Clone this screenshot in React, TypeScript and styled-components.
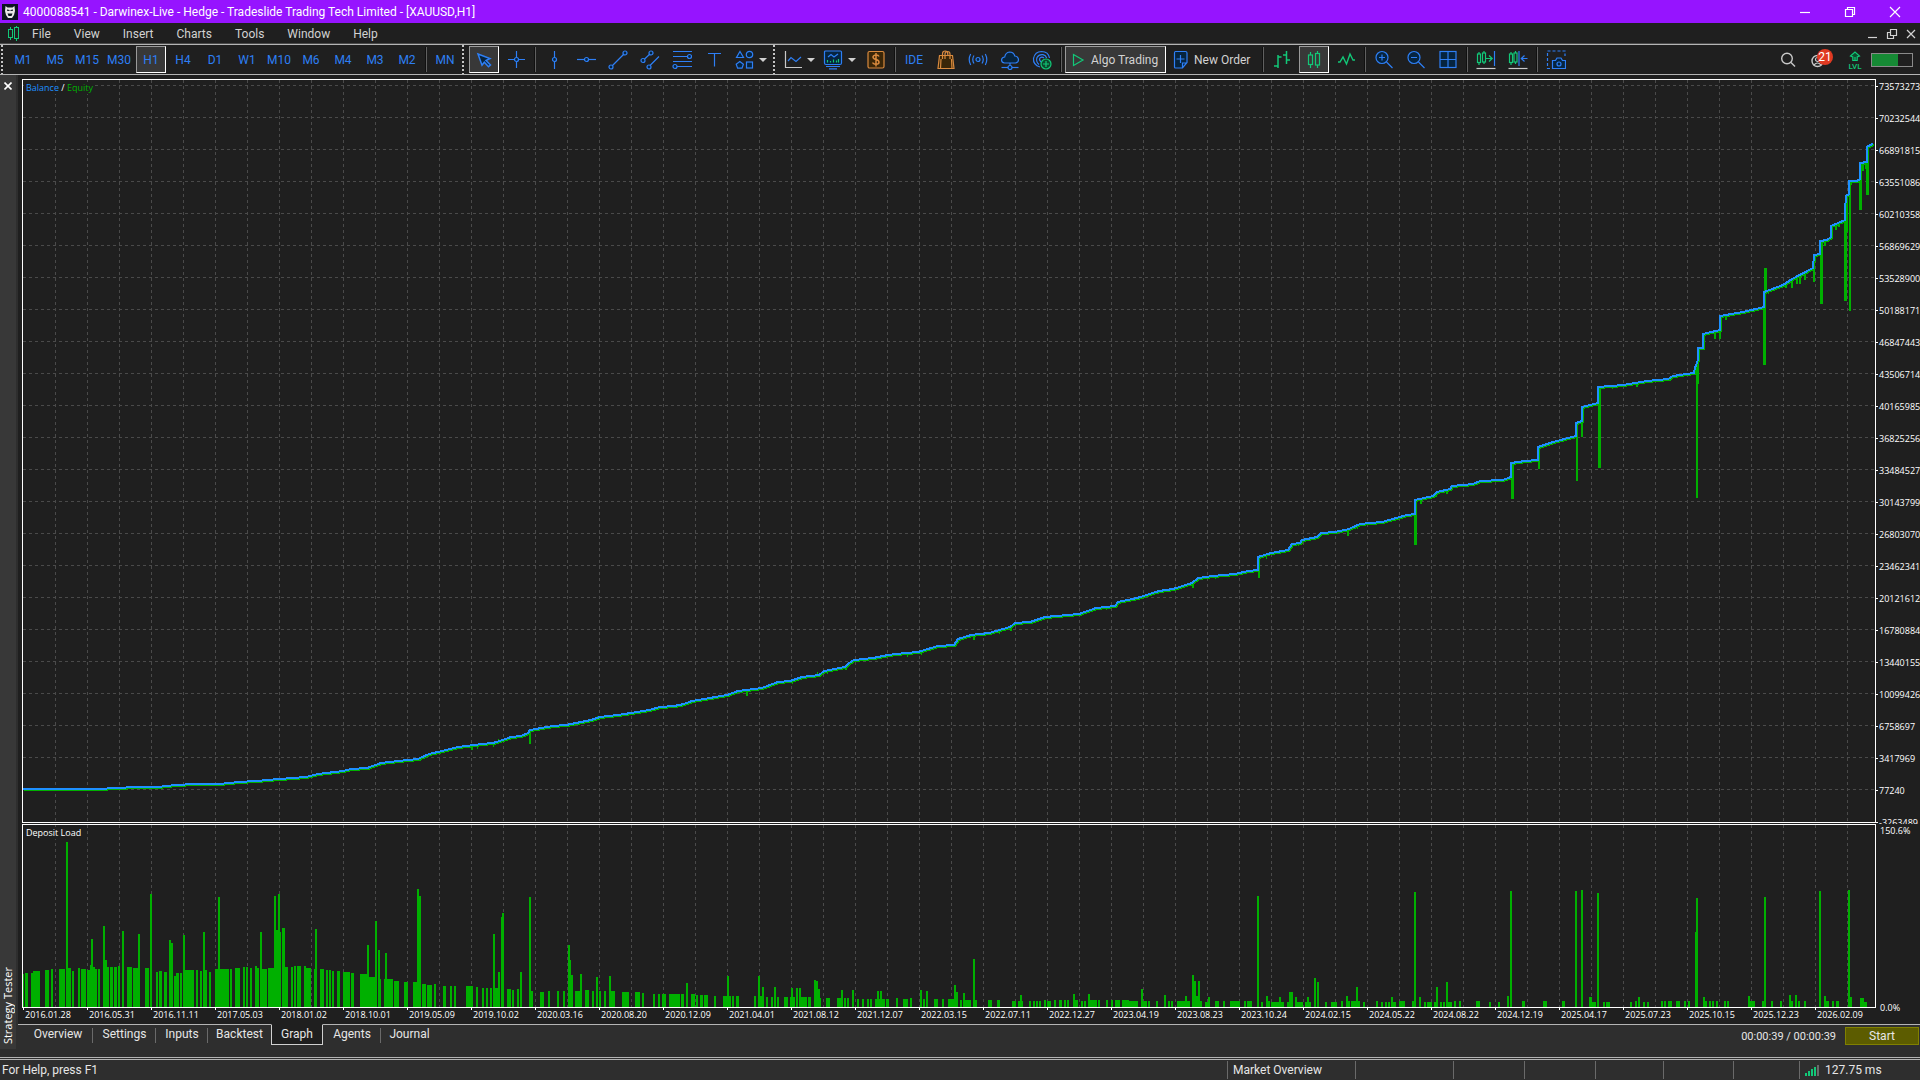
import React from 'react';
import styled, { createGlobalStyle, css } from 'styled-components';

const blue = '#2e7ff5';
const navy = '#06243f';
const green = '#12c878';
const orange = '#d98a3e';
const lime = '#00b000';

const GlobalStyle = createGlobalStyle`
  *, *::before, *::after { box-sizing: border-box; }
  html, body { margin: 0; padding: 0; background: #1f1f1f; }
  body { font-family: Roboto, "Open Sans", sans-serif; font-size: 12px; color: #e6e6e6; }
  button { font: inherit; color: inherit; background: none; border: 0; padding: 0; margin: 0; }
  svg { display: block; flex: none; }
`;

const Window = styled.div`
  display: flex;
  flex-direction: column;
  height: 100vh;
  overflow: hidden;
`;

const TitleBar = styled.header`
  display: flex;
  align-items: center;
  height: 23px;
  flex: none;
  padding: 0 3px 0 2px;
  background: #9614ff;
  color: #fff;
  white-space: nowrap;
`;

const Title = styled.h1`
  flex: 1;
  margin: 0 0 0 5px;
  font-size: 12px;
  font-weight: 400;
  line-height: 20px;
`;

const WindowButton = styled.button<{ $w: number }>`
  display: flex;
  flex: none;
  align-items: center;
  justify-content: center;
  width: ${(p) => p.$w}px;
  height: 20px;
`;

const MenuBar = styled.nav`
  display: flex;
  align-items: center;
  height: 21px;
  flex: none;
  padding: 0 4px 0 7px;
  gap: 12px;
  color: #d2d2d2;
`;

const MenuItems = styled.div`
  display: flex;
  flex: 1;
  gap: 23px;
  line-height: 18px;
`;

const ChartButtons = styled.div`
  display: flex;
  gap: 8px;
`;

const ToolBar = styled.div`
  display: flex;
  align-items: center;
  height: 31px;
  flex: none;
  gap: 2px;
  padding-left: 1px;
  padding-right: 7px;
  border-top: 1px solid #b4b4b4;
  border-bottom: 1px solid #b4b4b4;
  box-shadow: 0 -1px 0 #4a4a4a;
  color: ${blue};
  white-space: nowrap;
`;

const Tool = styled.button<{ $w?: number; $active?: boolean; $align?: string }>`
  display: flex;
  flex: none;
  align-items: center;
  justify-content: ${(p) => p.$align || 'center'};
  gap: 5px;
  width: ${(p) => p.$w || 30}px;
  height: 27px;
  border: 1px solid transparent;
  ${(p) =>
    p.$active &&
    css`
      background: #383838;
      border-color: #9a9a9a #fff #fff #9a9a9a;
    `}
`;

const ToolText = styled.span`
  color: #d2d2d2;
`;

const Separator = styled.span`
  width: 2px;
  height: 25px;
  margin: 0 1px;
  background: linear-gradient(90deg, #101010 50%, #606060 50%);
`;

const Grip = styled.span`
  width: 5px;
  height: 29px;
  background: repeating-linear-gradient(180deg, #c4c4c4 0 2px, transparent 2px 4px) left / 2px 100% no-repeat;
`;

const Caret = styled.span`
  border: 4px solid transparent;
  border-top-color: #d0d0d0;
  border-bottom: 0;
`;

const Spacer = styled.span`
  flex: 1;
`;

const Notice = styled.span`
  position: relative;
  display: block;
  width: 22px;
  height: 22px;
`;

const Badge = styled.span`
  position: absolute;
  top: 0;
  right: 0;
  width: 16px;
  height: 16px;
  border-radius: 8px;
  background: #e03a22;
  color: #fff;
  line-height: 16px;
  text-align: center;
`;

const Battery = styled.span`
  width: 42px;
  height: 14px;
  border: 1px solid #8a8a8a;
  background: linear-gradient(90deg, #168a35 65%, #1f1f1f 65%);
`;

const Workspace = styled.main`
  display: flex;
  flex: 1;
  min-height: 0;
  background: #2e2e2e;
`;

const SideStrip = styled.aside`
  display: flex;
  flex-direction: column;
  justify-content: space-between;
  align-items: center;
  width: 16px;
  flex: none;
  margin: 0 2px 8px 0;
  padding: 4px 0 5px;
  background: #383838;
`;

const CloseButton = styled.button`
  width: 14px;
  height: 14px;
  padding: 3px;
`;

const SideTitle = styled.span`
  writing-mode: vertical-rl;
  transform: rotate(180deg);
  font-family: "Open Sans", sans-serif;
  font-size: 11px;
  line-height: 14px;
  color: #fff;
`;

const Panel = styled.section`
  display: flex;
  flex-direction: column;
  flex: 1;
  min-width: 0;
`;

const Charts = styled.div`
  display: grid;
  flex: 1;
  min-height: 0;
  grid-template-columns: minmax(0, 1fr) 44px;
  grid-template-rows: minmax(0, 745fr) minmax(0, 184fr) 16px;
  padding: 4px 0 0 4px;
  background: #1f1f1f;
  color: #fff;
  font-family: "Open Sans", sans-serif;
  font-size: 9px;
  line-height: 12px;
`;

const Plot = styled.figure<{ $gap?: boolean }>`
  position: relative;
  margin: 0 0 ${(p) => (p.$gap ? 1 : 0)}px;
  min-height: 0;
  border: 1px solid #fff;
  overflow: hidden;
`;

const Drawing = styled.svg`
  width: 100%;
  height: 100%;
  shape-rendering: crispEdges;
`;

const Legend = styled.figcaption`
  position: absolute;
  top: 2px;
  left: 1px;
  padding: 0 2px;
  background: #1f1f1f;
`;

const Ink = styled.span<{ $c: string }>`
  color: ${(p) => p.$c};
`;

const PriceAxis = styled.div`
  min-height: 0;
  overflow: hidden;
`;

const PriceList = styled.div`
  display: flex;
  flex-direction: column;
  justify-content: space-between;
  height: calc(100% + 5px);
  padding-top: 2px;
`;

const PriceLabel = styled.span`
  display: flex;
  align-items: center;
  gap: 1px;
  &::before {
    content: '';
    flex: none;
    width: 2px;
    height: 1px;
    margin-bottom: 2px;
    background: #fff;
  }
`;

const LoadAxis = styled.div`
  display: flex;
  flex-direction: column;
  justify-content: space-between;
  padding: 1px 0 0 4px;
  margin-bottom: -6px;
`;

const TimeAxis = styled.div`
  display: grid;
  grid-column: 1 / 3;
  grid-template-columns: repeat(29, minmax(0, 1fr));
  margin: 0 41px 0 1px;
`;

const TimeLabel = styled.span`
  display: flex;
  gap: 1px;
  line-height: 14px;
  &::before {
    content: '';
    width: 1px;
    height: 2px;
    background: #fff;
  }
`;

const TabRow = styled.div`
  display: flex;
  height: 33px;
  flex: none;
  padding-left: 5px;
  border-top: 1px solid #b4b4b4;
`;

const Tab = styled.button<{ $active?: boolean; $last?: boolean; $w: number }>`
  position: relative;
  width: ${(p) => p.$w}px;
  height: 21px;
  padding-bottom: 3px;
  &::after {
    content: '';
    position: absolute;
    right: 0;
    top: 3px;
    width: 1px;
    height: 15px;
    background: ${(p) => (p.$last ? 'transparent' : '#6a6a6a')};
  }
  ${(p) =>
    p.$active &&
    css`
      margin-top: -1px;
      padding-bottom: 1px;
      background: #1f1f1f;
      border: 1px solid #d0d0d0;
      border-top-color: #1f1f1f;
      &::after {
        background: transparent;
      }
    `}
`;

const Timer = styled.span`
  margin-left: auto;
  margin-right: 9px;
  font-size: 11px;
  line-height: 24px;
`;

const StartButton = styled.button`
  width: 74px;
  height: 18px;
  margin: 2px 1px 0 0;
  line-height: 16px;
  background: #5c5c00;
  border: 1px solid #808000;
`;

const StatusBar = styled.footer`
  display: flex;
  align-items: center;
  height: 23px;
  flex: none;
  border-top: 3px double #b4b4b4;
  background: #2e2e2e;
`;

const Help = styled.span`
  flex: 1;
  padding-left: 2px;
`;

const StatusCell = styled.span<{ $w: number }>`
  display: flex;
  align-items: center;
  gap: 6px;
  width: ${(p) => p.$w}px;
  height: 18px;
  padding-left: 5px;
  border-left: 1px solid #6a6a6a;
`;

/* ---------- data ---------- */

const prices = [
  73573273, 70232544, 66891815, 63551086, 60210358, 56869629, 53528900, 50188171, 46847443, 43506714, 40165985,
  36825256, 33484527, 30143799, 26803070, 23462341, 20121612, 16780884, 13440155, 10099426, 6758697, 3417969, 77240,
  -3263489,
];

const dates = [
  '2016.01.28', '2016.05.31', '2016.11.11', '2017.05.03', '2018.01.02', '2018.10.01', '2019.05.09', '2019.10.02',
  '2020.03.16', '2020.08.20', '2020.12.09', '2021.04.01', '2021.08.12', '2021.12.07', '2022.03.15', '2022.07.11',
  '2022.12.27', '2023.04.19', '2023.08.23', '2023.10.24', '2024.02.15', '2024.05.22', '2024.08.22', '2024.12.19',
  '2025.04.17', '2025.07.23', '2025.10.15', '2025.12.23', '2026.02.09',
];

const balance =
  '23,789 97,789 136,787 157,787 176,785 194,784 219,784 239,782 256,781 279,779 306,777 318,774 343,771 351,769 367,768 381,763 398,761 418,759 429,754 442,751 458,747 482,744 493,743 503,740 511,737 521,736 528,733 530,730 553,726 566,725 591,720 600,717 618,715 637,712 649,710 660,707 674,706 684,704 692,701 704,699 727,695 738,691 762,688 778,682 790,681 802,677 819,675 824,671 845,667 849,663 854,660 873,658 888,655 906,653 918,652 938,646 954,645 958,639 971,635 989,633 1010,627 1015,623 1030,622 1045,617 1079,614 1096,608 1115,606 1118,602 1137,598 1159,591 1173,589 1192,583 1198,578 1213,576 1235,574 1248,571 1258,570 1258,557 1271,553 1288,550 1292,544 1300,543 1302,540 1317,537 1321,533 1335,532 1349,529 1360,524 1382,522 1407,515 1415,514 1415,500 1433,496 1437,492 1450,489 1452,486 1473,484 1480,481 1503,480 1511,477 1511,463 1525,461 1538,460 1538,447 1553,442 1576,436 1576,423 1582,421 1582,407 1598,403 1598,387 1623,385 1647,381 1668,379 1673,376 1694,373 1695,368 1698,360 1698,348 1703,348 1703,334 1720,330 1720,316 1743,312 1764,307 1764,292 1783,285 1792,279 1813,268 1814,255 1820,254 1820,241 1827,240 1831,237 1831,226 1845,220 1845,210 1846,196 1849,194 1849,181 1857,181 1860,179 1860,163 1867,162 1867,147 1870,145 1873,144';

/* equity excursions away from the balance line: [x, top, bottom, width] */
const excursions: number[][] = [
  [420, 759, 761, 1], [471, 746, 750, 2], [477, 746, 749, 1], [493, 743, 747, 1], [529, 733, 744, 2], [498, 739, 742, 1],
  [597, 716, 719, 1], [746, 690, 696, 2], [792, 681, 684, 1], [817, 672, 676, 1], [827, 671, 674, 1], [845, 667, 670, 2],
  [907, 653, 657, 1], [921, 651, 655, 1], [973, 636, 640, 2], [999, 630, 634, 1], [1010, 627, 631, 2],
  [1106, 607, 610, 1], [1192, 583, 588, 2], [1215, 576, 579, 1], [1258, 557, 578, 2], [1266, 555, 559, 1],
  [1298, 543, 546, 1], [1347, 530, 536, 2], [1357, 525, 529, 1], [1414, 500, 545, 3], [1420, 500, 504, 2],
  [1436, 493, 497, 1], [1446, 490, 494, 2], [1511, 463, 499, 3], [1538, 447, 469, 2], [1576, 423, 481, 2],
  [1581, 407, 437, 2], [1598, 387, 468, 3], [1612, 386, 389, 1], [1636, 383, 387, 2], [1669, 378, 381, 2],
  [1696, 361, 498, 2], [1697, 360, 384, 2], [1703, 334, 341, 2], [1714, 333, 339, 2], [1719, 330, 339, 2],
  [1725, 316, 320, 2], [1763, 292, 365, 3], [1764, 268, 292, 3], [1768, 291, 294, 1], [1785, 285, 288, 2],
  [1791, 280, 288, 2], [1796, 278, 284, 2], [1799, 277, 284, 2], [1804, 273, 280, 2], [1813, 257, 282, 2],
  [1820, 241, 304, 3], [1824, 241, 246, 2], [1835, 225, 230, 2], [1838, 224, 227, 2], [1844, 210, 301, 3],
  [1846, 196, 232, 2], [1849, 181, 311, 2], [1851, 181, 185, 1], [1859, 163, 210, 3], [1862, 163, 171, 2],
  [1865, 163, 169, 2], [1866, 150, 195, 3],
];

/* deposit load bars: [x, width, height] */
const load: number[][] = [
  [23, 1, 33], [25, 3, 34], [31, 2, 34], [33, 5, 36], [38, 2, 36], [45, 4, 37], [51, 2, 38], [59, 6, 38], [66, 2, 165], [68, 3, 39],
  [72, 2, 36], [78, 2, 39], [81, 5, 38], [87, 3, 37], [90, 1, 42], [91, 2, 68], [93, 2, 40], [95, 2, 38], [98, 2, 38],
  [103, 2, 81], [105, 2, 47], [107, 2, 40], [110, 3, 40], [114, 3, 40], [118, 2, 41], [122, 2, 76], [127, 5, 40],
  [133, 7, 39], [138, 2, 73], [145, 4, 39], [150, 2, 113], [156, 2, 35], [159, 3, 36], [164, 3, 35], [169, 2, 67],
  [171, 2, 64], [174, 2, 31], [176, 3, 34], [180, 2, 34], [183, 2, 72], [185, 9, 37], [196, 2, 37], [200, 2, 36],
  [203, 2, 75], [205, 2, 37], [209, 2, 35], [215, 3, 38], [218, 2, 110], [220, 9, 38], [230, 2, 38], [235, 5, 39],
  [243, 2, 40], [246, 2, 40], [250, 2, 39], [255, 2, 41], [257, 2, 39], [260, 2, 75], [262, 5, 38], [268, 6, 39],
  [274, 2, 111], [276, 2, 77], [278, 2, 113], [280, 1, 75], [282, 3, 79], [285, 3, 40], [291, 2, 40], [294, 2, 41],
  [297, 4, 41], [304, 2, 41], [306, 5, 39], [314, 1, 38], [315, 2, 78], [320, 4, 38], [326, 2, 37], [329, 2, 37],
  [332, 2, 36], [337, 3, 36], [343, 7, 35], [351, 3, 34], [360, 7, 33], [367, 2, 62], [369, 7, 30], [375, 2, 86],
  [378, 2, 57], [380, 1, 28], [384, 9, 28], [385, 2, 54], [394, 5, 26], [404, 4, 25], [413, 4, 25], [417, 2, 118],
  [419, 2, 111], [422, 4, 23], [427, 5, 22], [434, 2, 23], [443, 3, 21], [450, 2, 21], [454, 2, 21], [466, 7, 21],
  [476, 2, 20], [482, 2, 19], [486, 2, 19], [490, 2, 19], [493, 2, 73], [495, 3, 19], [498, 2, 35], [501, 1, 90],
  [502, 2, 94], [507, 4, 18], [512, 2, 17], [517, 2, 18], [520, 2, 35], [529, 2, 110], [531, 2, 16], [540, 4, 15],
  [548, 2, 16], [557, 2, 16], [563, 2, 16], [568, 2, 62], [570, 1, 47], [571, 2, 32], [575, 5, 16], [580, 2, 33],
  [585, 4, 17], [592, 2, 16], [596, 2, 30], [599, 2, 16], [604, 2, 16], [609, 2, 31], [611, 4, 16], [622, 7, 15],
  [635, 5, 15], [642, 2, 14], [653, 2, 13], [658, 2, 13], [662, 4, 13], [669, 11, 13], [681, 3, 13], [686, 2, 24],
  [691, 4, 13], [696, 2, 12], [700, 3, 12], [704, 4, 12], [714, 2, 11], [723, 8, 11], [727, 2, 31], [732, 2, 11],
  [736, 3, 11], [754, 2, 11], [758, 2, 31], [760, 4, 11], [762, 2, 20], [766, 2, 10], [771, 2, 10], [774, 2, 20],
  [777, 2, 10], [784, 4, 10], [790, 5, 10], [791, 2, 19], [796, 2, 19], [799, 2, 19], [801, 6, 10], [808, 3, 10],
  [814, 2, 27], [816, 2, 26], [818, 2, 18], [820, 1, 9], [826, 4, 9], [837, 6, 9], [841, 2, 17], [844, 2, 9],
  [847, 2, 9], [852, 2, 17], [857, 2, 8], [862, 2, 8], [867, 2, 8], [870, 2, 8], [875, 10, 8], [886, 3, 8], [877, 2, 16],
  [880, 2, 16], [896, 2, 9], [903, 5, 8], [910, 2, 9], [920, 2, 17], [923, 2, 8], [926, 2, 16], [934, 4, 8],
  [942, 2, 8], [948, 10, 8], [954, 2, 22], [956, 2, 15], [960, 2, 7], [963, 2, 14], [965, 6, 7], [973, 2, 48],
  [975, 2, 7], [988, 4, 7], [997, 3, 7], [1012, 4, 6], [1018, 5, 6], [1020, 2, 12], [1029, 2, 6], [1033, 2, 6],
  [1036, 2, 6], [1039, 2, 6], [1044, 2, 7], [1047, 4, 6], [1054, 2, 7], [1059, 3, 7], [1064, 2, 7], [1067, 2, 7],
  [1073, 2, 13], [1075, 3, 7], [1081, 2, 6], [1084, 2, 6], [1088, 2, 13], [1090, 7, 7], [1098, 2, 7], [1106, 2, 7],
  [1111, 2, 7], [1115, 5, 7], [1122, 7, 7], [1129, 9, 6], [1141, 2, 18], [1143, 4, 6], [1148, 2, 6], [1156, 2, 6],
  [1164, 2, 12], [1168, 2, 6], [1171, 2, 6], [1177, 8, 6], [1185, 2, 11], [1187, 3, 6], [1192, 2, 32], [1194, 2, 26],
  [1196, 2, 11], [1198, 2, 26], [1200, 2, 6], [1205, 4, 5], [1208, 2, 10], [1215, 4, 6], [1223, 2, 6], [1230, 10, 6],
  [1244, 2, 6], [1247, 5, 6], [1257, 2, 111], [1261, 2, 5], [1266, 2, 11], [1268, 2, 6], [1271, 8, 5], [1279, 2, 10],
  [1281, 3, 5], [1287, 2, 5], [1289, 4, 15], [1295, 2, 10], [1297, 6, 5], [1305, 6, 5], [1307, 2, 10], [1314, 2, 29],
  [1317, 2, 25], [1325, 2, 5], [1331, 6, 5], [1341, 2, 6], [1346, 2, 11], [1348, 2, 6], [1351, 9, 6], [1356, 2, 20],
  [1363, 2, 5], [1376, 2, 6], [1381, 2, 5], [1385, 2, 5], [1388, 2, 5], [1391, 2, 10], [1393, 3, 5], [1399, 6, 6],
  [1412, 2, 6], [1414, 2, 115], [1419, 2, 10], [1424, 2, 5], [1427, 5, 5], [1434, 2, 5], [1436, 2, 20], [1440, 2, 5],
  [1443, 2, 5], [1446, 2, 25], [1448, 4, 5], [1454, 2, 6], [1459, 2, 6], [1476, 4, 6], [1489, 2, 5], [1498, 2, 5],
  [1507, 2, 11], [1510, 2, 116], [1522, 3, 6], [1543, 4, 6], [1562, 3, 6], [1575, 2, 116], [1581, 2, 117],
  [1589, 3, 10], [1592, 4, 5], [1597, 2, 114], [1603, 2, 5], [1606, 4, 5], [1630, 2, 5], [1635, 2, 6], [1638, 2, 10],
  [1643, 2, 5], [1647, 2, 5], [1661, 2, 6], [1664, 2, 6], [1668, 4, 6], [1676, 4, 6], [1684, 2, 6], [1688, 2, 6],
  [1695, 1, 75], [1696, 2, 109], [1703, 2, 10], [1705, 2, 6], [1709, 2, 6], [1712, 2, 6], [1716, 2, 6], [1724, 2, 6],
  [1727, 2, 6], [1748, 2, 11], [1750, 5, 6], [1762, 2, 6], [1764, 2, 110], [1771, 2, 6], [1780, 2, 6], [1789, 2, 12],
  [1791, 2, 6], [1795, 2, 12], [1798, 2, 6], [1804, 2, 6], [1819, 2, 116], [1824, 2, 11], [1826, 3, 6], [1832, 2, 6],
  [1836, 3, 6], [1848, 2, 117], [1850, 2, 10], [1860, 4, 9], [1864, 3, 5],
];

const columns = Array.from({ length: 57 }, (_, i) => 55 + i * 32);
const rows = Array.from({ length: 23 }, (_, i) => 85 + i * 32);

/* ---------- icons ---------- */

type IconProps = { w?: number; h?: number; c?: string; children: React.ReactNode };
const Icon = ({ w = 20, h = 20, c = blue, children }: IconProps) => (
  <svg width={w} height={h} viewBox={`0 0 ${w} ${h}`} fill="none" stroke={c} strokeWidth="1.2" aria-hidden="true">
    {children}
  </svg>
);

const CandleIcon = ({ w = 16 }: { w?: number }) => (
  <Icon w={w} h={18} c={green}>
    <path d="M4.500 1v3M4.500 13v4M11.500 0v2M11.500 14v3" />
    <rect x="2.500" y="4" width="4" height="9.500" />
    <rect x="9.500" y="2.500" width="4" height="11.500" />
  </Icon>
);

const timeframes = ['M1', 'M5', 'M15', 'M30', 'H1', 'H4', 'D1', 'W1', 'M10', 'M6', 'M4', 'M3', 'M2'];
const menus = ['File', 'View', 'Insert', 'Charts', 'Tools', 'Window', 'Help'];

const Node = ({ x, y }: { x: number; y: number }) => <circle cx={x} cy={y} r="2" fill={navy} />;

const Tools = () => (
  <ToolBar role="toolbar">
    <Grip />
    {timeframes.map((t) => (
      <Tool key={t} $active={t === 'H1'}>
        {t}
      </Tool>
    ))}
    <Separator />
    <Tool>MN</Tool>
    <Grip />
    <Tool $active aria-label="Cursor">
      <Icon><path fill={navy} strokeWidth="1.500" d="M4 4l12 4.500-4 2 4.500 4.500-2 1.700-4.200-4.500-2.300 3z" /></Icon>
    </Tool>
    <Tool aria-label="Crosshair">
      <Icon><path d="M10.500 1v17M2 9.500h17" /><Node x={10.5} y={9.5} /></Icon>
    </Tool>
    <Separator />
    <Tool aria-label="Vertical line"><Icon><path d="M10.500 1v18" /><Node x={10.5} y={9.5} /></Icon></Tool>
    <Tool aria-label="Horizontal line"><Icon><path d="M1 9.500h19" /><Node x={10.5} y={9.5} /></Icon></Tool>
    <Tool aria-label="Trend line"><Icon><path d="M4 16L16 4" /><Node x={17} y={3} /><Node x={3} y={17} /></Icon></Tool>
    <Tool aria-label="Channel">
      <Icon><path d="M3 10.500L11 3M8.500 17L19 6.500" /><Node x={11} y={3} /><Node x={3} y={10.5} /><Node x={9} y={17} /></Icon>
    </Tool>
    <Tool aria-label="Fibonacci">
      <Icon><path d="M1 1.500h19M1 6.500h16M1 11.500h19M4 16.500h16" /><Node x={17.5} y={6.5} /><Node x={3} y={16.5} /></Icon>
    </Tool>
    <Tool aria-label="Text"><Icon><path d="M4 3.500h13M10.500 3.500v13" /></Icon></Tool>
    <Tool $w={40} $align="flex-start" aria-label="Shapes">
      <Icon w={22}>
        <path d="M8 1.500L11.500 7.500h-7zM7.800 11.500l3.600 2.700-1.400 4h-4.400l-1.400-4z" fill={navy} />
        <circle cx="17.500" cy="4.500" r="3.200" fill={navy} />
        <rect x="14.500" y="12" width="6" height="6" fill={navy} />
      </Icon>
      <Caret />
    </Tool>
    <Grip />
    <Tool $w={39} $align="flex-start" aria-label="Line chart">
      <Icon w={21}>
        <path stroke="#c8c8c8" d="M4.500 1v16.500H21" />
        <path d="M7 11l3-3.500 5 4 5-4.500" />
      </Icon>
      <Caret />
    </Tool>
    <Tool $w={38} $align="flex-start" aria-label="Indicators">
      <Icon w={21}>
        <path fill={navy} d="M3.500 1h15q1 0 1 1v11q0 1.500-1.500 1.500H4q-1.500 0-1.500-1.500V2q0-1 1-1zM4 16.500h14M7 18.800h8" />
        <path d="M6 7l3-2.500 3 2.500 4-3" />
        <path stroke={green} d="M5.500 10v2.500M8.500 11v1.500M11.500 9.500v3M14.500 10.500v2M16.500 9v3.500" />
      </Icon>
      <Caret />
    </Tool>
    <Tool aria-label="Deals">
      <Icon c={orange}>
        <rect x="2" y="1.500" width="16" height="16.500" rx="1.500" fill="#3a2608" />
        <path strokeWidth="1.500" d="M13 6.500q-.5-1.500-3-1.500t-3 2q0 1.800 3 2.500t3 2.700q0 2-3 2t-3.200-1.700M10 3v13.500" />
      </Icon>
    </Tool>
    <Separator />
    <Tool>IDE</Tool>
    <Tool aria-label="Market">
      <Icon c={orange}>
        <path fill="#3a2608" d="M3.500 5.500h13l1.500 13h-16z" />
        <path d="M6.500 9V4q0-3 2.700-3 2.600 0 2.600 3v1.500M9 9V4q0-2.500 2.500-2.500T14 4v5M15.500 9l.5 9.500M5 9l-.5 9.500" />
      </Icon>
    </Tool>
    <Tool aria-label="Signals">
      <Icon>
        <circle cx="10" cy="9.500" r="2" fill={navy} />
        <path d="M6 5.500q-2.500 4 0 8M14 5.500q2.500 4 0 8M2.700 4q-3 5.500 0 11M17.300 4q3 5.500 0 11" />
      </Icon>
    </Tool>
    <Tool aria-label="VPS">
      <Icon>
        <path fill={navy} d="M4.500 13Q1.500 12.500 1.500 10q.3-2.700 3.200-3Q5.500 2.500 9.500 2q4.200 0 5.300 4 3.500.5 3.700 3.700-.2 2.800-3 3.300zM10 13v4" />
        <path d="M1.500 17.500h17" /><Node x={10} y={17.5} />
      </Icon>
    </Tool>
    <Tool aria-label="Copy trading">
      <Icon>
        <path d="M8 17Q1 15 1.500 8.500 3 1.500 9.500 1.500q7 .2 8 6.500M7 14.500q-3.500-3-2-7Q7 4 11 4.700q2.800.8 3.700 3.300M9 12q-2.500-2.500-.7-4.300Q10.200 6.500 12 8" />
        <circle cx="14" cy="14" r="5" stroke={green} fill="#0b4a2e" />
        <path stroke={green} d="M14 11v6M11 14h6" />
      </Icon>
    </Tool>
    <Separator />
    <Tool $w={101} $active $align="flex-start">
      <Icon c={green}><path d="M7.500 4.500l9.500 5.500-9.500 5.500z" /></Icon>
      <ToolText>Algo Trading</ToolText>
    </Tool>
    <Tool $w={91} $align="flex-start">
      <Icon>
        <path fill={navy} d="M6.500 1.500h10q1.500 0 1.500 1.500v9.500L13.500 18H6.500Q5.500 18 5.500 17V3q0-1.500 1-1.500zM13.500 18v-5H18M11.500 5v8M7.500 9h8" />
      </Icon>
      <ToolText>New Order</ToolText>
    </Tool>
    <Separator />
    <Tool aria-label="Bars"><Icon c={green}><path strokeWidth="1.500" d="M6 5v13M2 16h4M6 7h3.500M14.500 1v13M11 5h3.500M14.500 10H18" /></Icon></Tool>
    <Tool $active aria-label="Candles"><CandleIcon /></Tool>
    <Tool aria-label="Line"><Icon c={green}><path strokeWidth="1.400" d="M2 12h2l3-5 3.500 7 3.500-10 3 6h2" /></Icon></Tool>
    <Separator />
    <Tool aria-label="Zoom in">
      <Icon><circle cx="8" cy="7.500" r="6" fill={navy} /><path d="M12.500 12l6 6M5 7.500h6M8 4.500v6" /></Icon>
    </Tool>
    <Tool aria-label="Zoom out">
      <Icon><circle cx="8" cy="7.500" r="6" fill={navy} /><path d="M12.500 12l6 6M5 7.500h6" /></Icon>
    </Tool>
    <Tool aria-label="Tile windows">
      <Icon><rect x="2" y="1.500" width="16" height="16" fill={navy} /><path d="M10 1.500v16M2 9.500h16" /></Icon>
    </Tool>
    <Separator />
    <Tool aria-label="Auto scroll">
      <Icon c={green}>
        <path d="M3 2v13M8 1v13M10 8.500h6M13 5.500l3.200 3-3.200 3" />
        <rect x="1.500" y="4" width="3" height="8.500" fill="#1f1f1f" /><rect x="6.500" y="3" width="3" height="9" fill="#1f1f1f" />
        <path stroke={blue} d="M18.500 1v15" /><path stroke="#c8c8c8" d="M.5 18.500h19" />
      </Icon>
    </Tool>
    <Tool aria-label="Chart shift">
      <Icon c={green}>
        <path d="M3 2v13M7.500 1v13" />
        <rect x="1.500" y="4" width="3" height="8.500" fill="#1f1f1f" /><rect x="6" y="3" width="3" height="9" fill="#1f1f1f" />
        <path stroke={blue} d="M11 1v15M19.500 8.500H13.500M16.500 5.500l-3.200 3 3.200 3" /><path stroke="#c8c8c8" d="M.5 18.500h19" />
      </Icon>
    </Tool>
    <Separator />
    <Tool aria-label="Screenshot">
      <Icon>
        <path strokeDasharray="3 2" d="M4 18.500H1.500V1h17.500v5" />
        <path fill={navy} d="M6.500 10.500h3l1.500-2.500h4l1.500 2.500h3v8h-13z" /><circle cx="13" cy="14" r="2" />
      </Icon>
    </Tool>
    <Spacer />
    <Tool aria-label="Search">
      <Icon c="#c8c8c8"><circle cx="9" cy="8.500" r="5.300" strokeWidth="1.400" /><path strokeWidth="1.400" d="M13 12.500l4 4" /></Icon>
    </Tool>
    <Tool $w={34} aria-label="Notifications">
      <Notice>
        <Icon c="#c8c8c8"><circle cx="6.500" cy="12" r="5.500" strokeWidth="1.400" /><circle cx="6.500" cy="10.500" r="2" /><path d="M3 16q3.500-4 7 0" /></Icon>
        <Badge>21</Badge>
      </Notice>
    </Tool>
    <Tool $w={28} aria-label="Level">
      <svg width="18" height="20" viewBox="0 0 18 20" aria-hidden="true">
        <path d="M9 10.500V7M4.500 6L9 2l4.500 4-2.300 1v3.500H6.800V7z" fill="#0b4a2e" stroke={green} strokeWidth="1.200" />
        <text x="9" y="19" textAnchor="middle" fontSize="8" fontWeight="500" fill={green}>LVL</text>
      </svg>
    </Tool>
    <Battery />
  </ToolBar>
);

const EquityPlot = () => (
  <Plot $gap>
    <Drawing viewBox="23 80 1852 742" preserveAspectRatio="none" aria-label="Balance and equity">
      <g stroke="#4a4a4a" strokeDasharray="3 3">
        {columns.map((x) => <path key={x} d={`M${x + 0.5} 80V822`} />)}
        {rows.map((y) => <path key={y} d={`M23 ${y + 0.5}H1875`} />)}
      </g>
      <polyline points={balance} fill="none" stroke={lime} strokeWidth="2" transform="translate(1 1)" />
      {excursions.map(([x, top, bottom, w]) => (
        <rect key={`${x}-${top}`} x={x} y={top} width={w} height={bottom - top} fill={lime} />
      ))}
      <polyline points={balance} fill="none" stroke="#1e90ff" strokeWidth="2" />
    </Drawing>
    <Legend>
      <Ink $c="#1e90ff">Balance</Ink> / <Ink $c="#00b000">Equity</Ink>
    </Legend>
  </Plot>
);

const LoadPlot = () => (
  <Plot>
    <Drawing viewBox="23 0 1852 182" preserveAspectRatio="none" aria-label="Deposit load">
      <g stroke="#4a4a4a" strokeDasharray="3 3">
        {columns.map((x) => <path key={x} d={`M${x + 0.5} 0V182`} />)}
      </g>
      {load.map(([x, w, h]) => <rect key={`${x}-${h}`} x={x} y={182 - h} width={w} height={h} fill={lime} />)}
    </Drawing>
    <Legend>Deposit Load</Legend>
  </Plot>
);

export default function App() {
  return (
    <Window>
      <GlobalStyle />
      <TitleBar>
        <svg width="16" height="16" viewBox="0 0 16 16" aria-hidden="true">
          <rect width="16" height="16" fill="#0b1420" />
          <path d="M3.500 2l2 1.500h5l2-1.500.5 5-1 4-2 3H6l-2-3-1-4z" fill="#e8e8e8" />
          <path d="M5 5.500l2.500.5v1L5 6.800zM11 5.500L8.500 6v1l2.500-.2zM5.500 9.500h5l-1 2.500h-3z" fill="#0b1420" />
        </svg>
        <Title>4000088541 - Darwinex-Live - Hedge - Tradeslide Trading Tech Limited - [XAUUSD,H1]</Title>
        <WindowButton $w={45} aria-label="Minimize">
          <Icon w={12} h={12} c="#fff"><path d="M1 6.500h10" /></Icon>
        </WindowButton>
        <WindowButton $w={45} aria-label="Restore">
          <Icon w={12} h={12} c="#fff"><path d="M1.500 3.500h7v7h-7zM3.500 3V1.500h7v7H9" /></Icon>
        </WindowButton>
        <WindowButton $w={45} aria-label="Close">
          <Icon w={12} h={12} c="#fff"><path d="M1 1l10 10M11 1L1 11" /></Icon>
        </WindowButton>
      </TitleBar>
      <MenuBar>
        <svg width="13" height="15" viewBox="0 0 13 15" fill="none" stroke={green} aria-hidden="true">
          <path d="M3.500 1v2M3.500 11v3M9.500 0v1M9.500 12v3" />
          <rect x="1.500" y="3.500" width="4" height="8" />
          <rect x="7.500" y="1.500" width="4" height="11" />
        </svg>
        <MenuItems>
          {menus.map((m) => <button key={m}>{m}</button>)}
        </MenuItems>
        <ChartButtons>
          <WindowButton $w={10} aria-label="Minimize chart">
            <Icon w={10} h={10} c="#d2d2d2"><path d="M0 8.500h9" /></Icon>
          </WindowButton>
          <WindowButton $w={12} aria-label="Restore chart">
            <Icon w={12} h={12} c="#d2d2d2"><path d="M5 4.500H1.500v6h6V7M4.500 1.500h6v6h-6z" /></Icon>
          </WindowButton>
          <WindowButton $w={10} aria-label="Close chart">
            <Icon w={10} h={10} c="#d2d2d2"><path d="M1 1l8 8M9 1L1 9" /></Icon>
          </WindowButton>
        </ChartButtons>
      </MenuBar>
      <Tools />
      <Workspace>
        <SideStrip>
          <CloseButton aria-label="Close panel">
            <svg width="8" height="8" viewBox="0 0 8 8" stroke="#fff" strokeWidth="1.600" aria-hidden="true"><path d="M.5.5l7 7M7.500.5l-7 7" /></svg>
          </CloseButton>
          <SideTitle>Strategy Tester</SideTitle>
        </SideStrip>
        <Panel>
          <Charts>
            <EquityPlot />
            <PriceAxis>
              <PriceList>
                {prices.map((p) => <PriceLabel key={p}>{p}</PriceLabel>)}
              </PriceList>
            </PriceAxis>
            <LoadPlot />
            <LoadAxis>
              <span>150.6%</span>
              <span>0.0%</span>
            </LoadAxis>
            <TimeAxis>
              {dates.map((d) => <TimeLabel key={d}>{d}</TimeLabel>)}
            </TimeAxis>
          </Charts>
          <TabRow>
            <Tab $w={70}>Overview</Tab>
            <Tab $w={63}>Settings</Tab>
            <Tab $w={52}>Inputs</Tab>
            <Tab $w={63} $last>Backtest</Tab>
            <Tab $w={52} $active>Graph</Tab>
            <Tab $w={58}>Agents</Tab>
            <Tab $w={57} $last>Journal</Tab>
            <Timer>00:00:39 / 00:00:39</Timer>
            <StartButton>Start</StartButton>
          </TabRow>
        </Panel>
      </Workspace>
      <StatusBar>
        <Help>For Help, press F1</Help>
        <StatusCell $w={128}>Market Overview</StatusCell>
        <StatusCell $w={98} />
        <StatusCell $w={71} />
        <StatusCell $w={71} />
        <StatusCell $w={68} />
        <StatusCell $w={70} />
        <StatusCell $w={66} />
        <StatusCell $w={121}>
          <svg width="14" height="12" viewBox="0 0 14 12" aria-hidden="true">
            <path d="M1 9v3M4 7v5M7 5v7M10 3v9" stroke={green} strokeWidth="2" />
            <path d="M13 1v11" stroke="#6a6a6a" strokeWidth="2" />
          </svg>
          127.75 ms
        </StatusCell>
      </StatusBar>
    </Window>
  );
}
